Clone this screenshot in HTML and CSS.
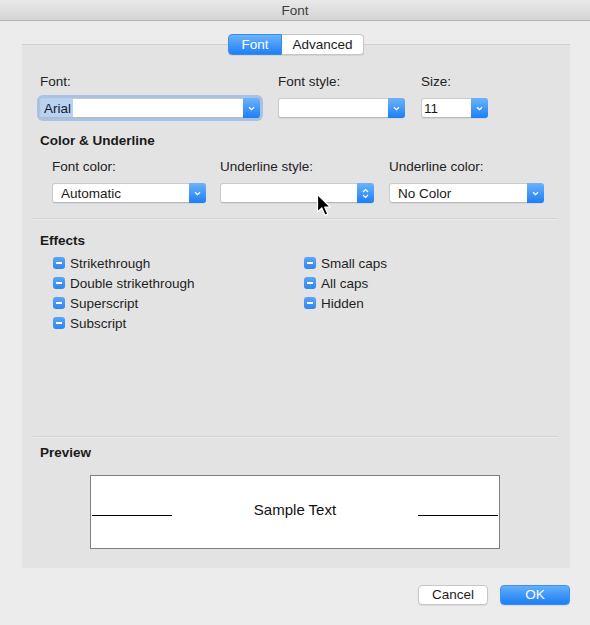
FILE: index.html
```html
<!DOCTYPE html>
<html>
<head>
<meta charset="utf-8">
<link rel="stylesheet" href="styles.css">
</head>
<body>
<div class="titlebar">Font</div>
<div class="content">
  <div class="tabs">
    <span class="tab tab-active">Font</span>
    <span class="tab">Advanced</span>
  </div>
  <div class="panel">
    <div class="row row-font">
      <div class="field w-font gap-18">
        <div class="label">Font:</div>
        <div class="select focus">
          <span class="val val-font"><span class="hl">Arial</span></span>
          <span class="btn"><svg width="7" height="5" viewBox="0 0 7 5"><path d="M1 1.2 L3.5 3.7 L6 1.2" fill="none" stroke="#fff" stroke-width="1.3"/></svg></span>
        </div>
      </div>
      <div class="field w-style gap-16">
        <div class="label">Font style:</div>
        <div class="select">
          <span class="val"></span>
          <span class="btn"><svg width="7" height="5" viewBox="0 0 7 5"><path d="M1 1.2 L3.5 3.7 L6 1.2" fill="none" stroke="#fff" stroke-width="1.3"/></svg></span>
        </div>
      </div>
      <div class="field w-size">
        <div class="label">Size:</div>
        <div class="select">
          <span class="val val-size">11</span>
          <span class="btn"><svg width="7" height="5" viewBox="0 0 7 5"><path d="M1 1.2 L3.5 3.7 L6 1.2" fill="none" stroke="#fff" stroke-width="1.3"/></svg></span>
        </div>
      </div>
    </div>

    <div class="heading h-color">Color &amp; Underline</div>
    <div class="row row-color">
      <div class="field w-col gap-14">
        <div class="label">Font color:</div>
        <div class="select">
          <span class="val">Automatic</span>
          <span class="btn"><svg width="7" height="5" viewBox="0 0 7 5"><path d="M1 1.2 L3.5 3.7 L6 1.2" fill="none" stroke="#fff" stroke-width="1.3"/></svg></span>
        </div>
      </div>
      <div class="field w-col gap-15">
        <div class="label">Underline style:</div>
        <div class="select">
          <span class="val"></span>
          <span class="btn"><svg width="7" height="11" viewBox="0 0 7 11"><path d="M1 4 L3.5 1.5 L6 4 M1 7 L3.5 9.5 L6 7" fill="none" stroke="#fff" stroke-width="1.2"/></svg></span>
        </div>
      </div>
      <div class="field w-col2">
        <div class="label">Underline color:</div>
        <div class="select">
          <span class="val">No Color</span>
          <span class="btn"><svg width="7" height="5" viewBox="0 0 7 5"><path d="M1 1.2 L3.5 3.7 L6 1.2" fill="none" stroke="#fff" stroke-width="1.3"/></svg></span>
        </div>
      </div>
    </div>

    <div class="sep sep-1"></div>

    <div class="heading h-effects">Effects</div>
    <div class="effects">
      <label class="check"><span class="box"></span>Strikethrough</label>
      <label class="check"><span class="box"></span>Small caps</label>
      <label class="check"><span class="box"></span>Double strikethrough</label>
      <label class="check"><span class="box"></span>All caps</label>
      <label class="check"><span class="box"></span>Superscript</label>
      <label class="check"><span class="box"></span>Hidden</label>
      <label class="check"><span class="box"></span>Subscript</label>
    </div>

    <div class="sep sep-2"></div>

    <div class="heading h-preview">Preview</div>
    <div class="preview">
      <span class="pv-line pv-left"></span>
      <span class="pv-text">Sample Text</span>
      <span class="pv-line pv-right"></span>
    </div>
  </div>

  <div class="buttons">
    <button class="button">Cancel</button>
    <button class="button button-ok">OK</button>
  </div>
</div>

<svg class="cursor" width="16" height="24" viewBox="0 0 16 24">
  <path d="M1.5 1.5 L1.5 19 L5.8 15 L9 22.3 L11.8 21.1 L8.7 14 L14.3 14 Z" fill="#000" stroke="#fff" stroke-width="1.2" stroke-linejoin="round"/>
</svg>
</body>
</html>
```

FILE: styles.css
```css
html, body {
  margin: 0;
  padding: 0;
}

body {
  width: 590px;
  height: 625px;
  background: #ececec;
  font-family: "Liberation Sans", Arial, sans-serif;
  font-size: 13.5px;
  color: #1e1e1e;
  position: relative;
  overflow: hidden;
}

.titlebar {
  height: 20px;
  line-height: 21px;
  text-align: center;
  color: #3d3d3d;
  background: linear-gradient(#e9e9e9, #d4d4d4);
  border-bottom: 1px solid #b4b4b4;
}

.content {
  padding: 13px 20px 0 22px;
}

.tabs {
  display: flex;
  justify-content: center;
  position: relative;
  z-index: 1;
  margin-bottom: -11px;
}

.tab {
  height: 19px;
  line-height: 20px;
  box-sizing: content-box;
  background: #fff;
  border: 1px solid #c6c6c6;
  color: #1b1b1b;
  text-align: center;
  width: 81px;
  border-radius: 0 4px 4px 0;
  border-left: none;
  box-shadow: 0 1px 1px rgba(0, 0, 0, 0.08);
}

.tab-active {
  width: 52px;
  border-radius: 4px 0 0 4px;
  border: 1px solid #3a8cf0;
  background: linear-gradient(#6cb3fb, #1e80f4);
  color: #fff;
}

.panel {
  background: #e3e3e3;
  border-top: 1px solid #cfcfcf;
  padding: 0 0 19px 18px;
}

.row {
  display: flex;
}

.row-font {
  padding-top: 29px;
}

.row-color {
  margin-top: 10px;
  padding-left: 12px;
}

.field {
  display: flex;
  flex-direction: column;
}

.label {
  line-height: 16px;
  height: 16px;
  margin-bottom: 8px;
  color: #222;
}

.w-font { width: 220px; }
.w-style { width: 127px; }
.w-size { width: 67px; }
.w-col { width: 154px; }
.w-col2 { width: 155px; }

.gap-18 { margin-right: 18px; }
.gap-16 { margin-right: 16px; }
.gap-14 { margin-right: 14px; }
.gap-15 { margin-right: 15px; }

.select {
  display: flex;
  height: 20px;
  box-sizing: border-box;
  background: #fff;
  border: 1px solid #cbcbcb;
  border-bottom-color: #b9b9b9;
  border-radius: 3px;
  box-shadow: 0 1px 1px rgba(0, 0, 0, 0.06);
}

.select.focus {
  box-shadow: 0 0 0 3px #a8c2e6;
}

.val {
  flex: 1;
  line-height: 19px;
  padding-left: 8px;
  color: #1b1b1b;
  white-space: nowrap;
}

.val-font {
  padding-left: 0;
}

.hl {
  display: inline-block;
  background: #b6d2f7;
  padding: 0 2px 0 3px;
  height: 18px;
}

.val-size {
  padding-left: 2px;
}

.btn {
  width: 17px;
  margin: -1px -1px -1px 0;
  border-radius: 0 3px 3px 0;
  background: linear-gradient(#6db3fb, #1b7ff4);
  display: flex;
  align-items: center;
  justify-content: center;
}

.heading {
  font-weight: bold;
  line-height: 16px;
  height: 16px;
  color: #1a1a1a;
}

.h-color { margin-top: 15px; }
.h-effects { margin-top: 14px; }
.h-preview { margin-top: 8px; }

.sep {
  height: 1px;
  background: #d4d4d4;
  margin-left: -7px;
  margin-right: 12px;
  box-shadow: 0 1px 0 #ebebeb;
}

.sep-1 { margin-top: 15px; }
.sep-2 { margin-top: 103px; }

.effects {
  display: grid;
  grid-template-columns: 251px auto;
  grid-auto-rows: 20px;
  margin-top: 4px;
  padding-left: 13px;
}

.check {
  display: flex;
  align-items: center;
  color: #1e1e1e;
}

.box {
  width: 12px;
  height: 12px;
  border-radius: 3px;
  background: linear-gradient(#5aa5f7, #2f86ee);
  margin-right: 5px;
  position: relative;
  flex: none;
}

.box::after {
  content: "";
  position: absolute;
  left: 3px;
  right: 3px;
  top: 5px;
  height: 2px;
  background: #fff;
}

.preview {
  margin-top: 14px;
  margin-left: 50px;
  width: 410px;
  height: 74px;
  box-sizing: border-box;
  background: #fff;
  border: 1px solid #7f7f7f;
  display: flex;
  align-items: flex-start;
}

.pv-line {
  width: 80px;
  height: 1px;
  background: #000;
  margin-top: 39px;
  flex: none;
}

.pv-left { margin-left: 1px; }
.pv-right { margin-right: 1px; }

.pv-text {
  flex: 1;
  text-align: center;
  margin-top: 25px;
  line-height: 17px;
  font-size: 15px;
  color: #111;
}

.buttons {
  display: flex;
  justify-content: flex-end;
  gap: 12px;
  margin-top: 17px;
}

.button {
  width: 70px;
  height: 20px;
  box-sizing: border-box;
  padding: 0;
  font-family: "Liberation Sans", Arial, sans-serif;
  font-size: 13.5px;
  line-height: 18px;
  background: #fff;
  color: #1e1e1e;
  border: 1px solid #c6c6c6;
  border-radius: 4px;
  box-shadow: 0 1px 1px rgba(0, 0, 0, 0.08);
}

.button-ok {
  background: linear-gradient(#63affb, #1c7ef5);
  border-color: #3d8ff0;
  color: #fff;
}

.cursor {
  position: absolute;
  left: 316px;
  top: 193px;
}
```
